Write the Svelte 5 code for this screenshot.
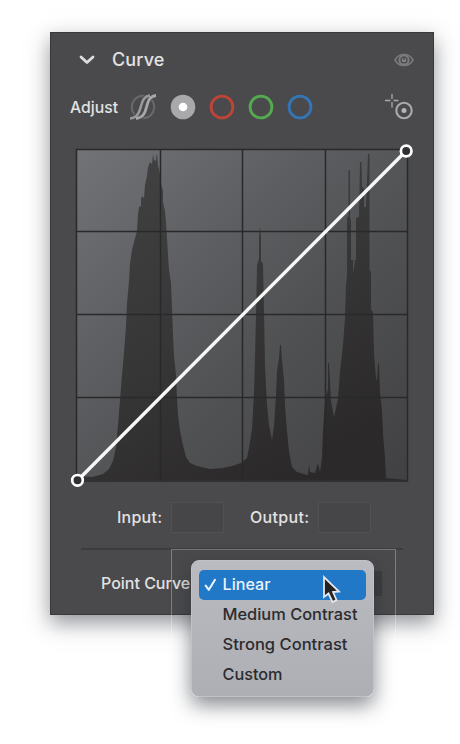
<script>
  const options = ['Linear', 'Medium Contrast', 'Strong Contrast', 'Custom'];
  const widths = [48, 135, 125, 60];
  const channels = [
    { name: 'red', color: '#bd4437' },
    { name: 'green', color: '#55a94e' },
    { name: 'blue', color: '#3475b5' }
  ];
  const columns = [160.5, 242.5, 325.5];
  const rows = [231.5, 314.5, 397.5];
</script>

<main>
  <section class="panel">
    <header class="head">
      <svg class="chevron" width="16" height="12" viewBox="0 0 16 12"><path d="M2 3 L8 8.6 L14 3" fill="none" stroke="#dedede" stroke-width="2.8" stroke-linecap="round" stroke-linejoin="round" /></svg>
      <h1>Curve</h1>
      <svg class="eye" width="20" height="14" viewBox="0 0 20 14">
        <path d="M1 7 C5 -.3 15 -.3 19 7 C15 14.3 5 14.3 1 7Z" fill="none" stroke="#79797b" stroke-width="1.6" />
        <circle cx="10" cy="7" r="4.6" fill="none" stroke="#7c7c7e" stroke-width="2" />
        <circle cx="10" cy="7" r="2.3" fill="#858587" /><path d="M10 7V3.6" stroke="#4a4a4c" stroke-width="1.4" />
      </svg>
    </header>

    <div class="adjust">
      <svg class="label" width="50" height="24"><text x="1" y="18" textLength="48" lengthAdjust="spacingAndGlyphs">Adjust</text></svg>
      <svg class="parametric" width="28" height="28" viewBox="0 0 28 28">
        <circle cx="13" cy="14" r="11.2" fill="none" stroke="#69696b" stroke-width="2" />
        <path d="M0 25.5 C15 24 7 4 20 2.5M6 25.5 C21 24 12.5 4 26 2.5" fill="none" stroke="#4a4a4c" stroke-width="4.6" />
        <path d="M0 25.5 C15 24 7 4 20 2.5" fill="none" stroke="#99999b" stroke-width="2.6" />
        <path d="M6 25.5 C21 24 12.5 4 26 2.5" fill="none" stroke="#a8a8aa" stroke-width="2.8" />
      </svg>
      <svg class="point" width="26" height="26" viewBox="0 0 26 26"><circle cx="13" cy="13" r="12.3" fill="#a9a9ac" /><circle cx="13" cy="13" r="4.3" fill="#fff" /></svg>
      {#each channels as c (c.name)}
        <svg class="channel" width="26" height="26" viewBox="0 0 26 26"><circle cx="13" cy="13" r="10.9" fill="none" stroke={c.color} stroke-width="2.9" /></svg>
      {/each}
      <svg class="target" width="30" height="28" viewBox="0 0 30 28" fill="none" stroke="#aaaaac">
        <path d="M8 1v5M8 9v5.5M1 7.5h5.5M9.5 7.5h5" stroke-width="1.3" />
        <circle cx="20" cy="17.5" r="7.7" stroke-width="2.1" /><circle cx="20" cy="17.5" r="2.5" fill="#b5b5b7" stroke="none" />
      </svg>
    </div>

    <svg class="plot" width="350" height="350" viewBox="70 140 350 350">
      <defs>
        <linearGradient id="bg" x1="0" y1="0" x2="1" y2="1">
          <stop offset="0" stop-color="#727376" /><stop offset=".35" stop-color="#5d5e61" /><stop offset=".6" stop-color="#505153" /><stop offset="1" stop-color="#414143" />
        </linearGradient>
        <linearGradient id="hist" gradientUnits="userSpaceOnUse" x1="100" y1="160" x2="280" y2="480">
          <stop offset="0" stop-color="#424243" /><stop offset=".55" stop-color="#373637" /><stop offset="1" stop-color="#2b292a" />
        </linearGradient>
      </defs>
      <rect x="76.5" y="149.5" width="331" height="331" fill="url(#bg)" />
      <path fill="url(#hist)" d="M77 480 V476 L92 477 L103 474 L109 469 L113 461 L116 447 L118 425 L120 400 L122 375 L124 352 L126 326 L127 303 L129 281 L130 264 L132 250 L134 242 L137 231 L138 215 L139 207 L141 206 L141 199 L142 196 L144 198 L145 185 L147 176 L148 167 L150 162 L152 164 L153 154 L154 160 L156 161 L156 157 L157 154 L158 165 L160 174 L161 184 L163 191 L163 202 L165 211 L166 222 L167 238 L168 255 L169 270 L171 283 L172 307 L173 335 L174 356 L176 375 L177 399 L178 415 L180 431 L183 445 L186 457 L190 463 L197 466 L210 469 L223 468 L232 466 L241 463 L247 458 L249 448 L252 429 L254 393 L255 357 L256 315 L257 265 L259 259 L259 227 L260 236 L261 226 L261 261 L263 264 L264 310 L265 365 L267 405 L269 425 L272 440 L274 426 L276 395 L277 371 L279 358 L280 345 L281 345 L282 360 L284 380 L285 405 L287 431 L289 451 L292 467 L297 472 L307 475 L308 475 L309 464 L310 472 L315 473 L318 463 L320 472 L322 458 L323 430 L325 400 L328 389 L328 363 L329 363 L331 401 L334 417 L338 399 L340 372 L343 345 L345 318 L346 285 L347 276 L347 218 L348.5 216 L348.5 170 L350 170 L350 218 L351 220 L351 260 L353 260 L353 274 L355 260 L356 260 L356 218 L359 217 L360 162 L361.5 162 L362 187 L364 188 L364 207 L366 207 L368 154 L369.5 154 L369.5 270 L371 272 L371 309 L373 312 L374 353 L376 379 L377 380 L378 363 L379 364 L380 392 L382 411 L383 434 L385 457 L386 478 L407 480Z" />
      <g stroke="#29292b" stroke-width="1.5" fill="none">
        <rect x="76.5" y="149.5" width="331" height="331.5" />
        {#each columns as x}<path d="M{x} 150V481" />{/each}
        {#each rows as y}<path d="M77 {y}H408" />{/each}
      </g>
      <path d="M78 480L406 151" stroke="#f7f7f7" stroke-width="3.4" />
      <g fill="#303032" stroke="#fff" stroke-width="2.7"><circle cx="77.5" cy="480.3" r="5.3" /><circle cx="406.2" cy="151" r="5.3" /></g>
    </svg>

    <div class="values">
      <svg class="label" width="46" height="24"><text x="0" y="18" textLength="45">Input:</text></svg>
      <span class="field"></span>
      <svg class="label output" width="60" height="24"><text x="0" y="18" textLength="59">Output:</text></svg>
      <span class="field"></span>
    </div>
    <hr />
    <div class="point-curve">
      <svg class="label" width="92" height="26"><text x="0" y="19" textLength="94">Point Curve:</text></svg>
      <span class="select"></span>
    </div>

    <div class="frame"></div>
    <div class="menu">
      {#each options as option, i}
        <div class="option" class:selected={i === 0}>
          {#if i === 0}
            <svg class="check" width="13" height="14" viewBox="0 0 13 14"><path d="M1.7 7.7L4.8 11.8L11 1.8" fill="none" stroke="#e9f2fb" stroke-width="2.1" stroke-linecap="round" stroke-linejoin="round" /></svg>
          {/if}
          <svg class="name" width="140" height="24"><text x="-.5" y="17" textLength={widths[i]} lengthAdjust="spacingAndGlyphs">{option}</text></svg>
        </div>
      {/each}
      <svg class="cursor" width="22" height="32" viewBox="0 0 22 32"><path d="M2 3 L2 23 L6.5 19.5 L10.5 28 L14.5 26 L11 18 L17 17.5Z" fill="#242122" stroke="#e4e7ec" stroke-width="1.8" stroke-linejoin="miter" /></svg>
    </div>
  </section>
</main>

<style>
  :global(body) { background: #fff; }
  main { box-sizing: border-box; width: 460px; height: 744px; padding: 32px 0 0 50px; overflow: hidden; font-family: Inter, "Liberation Sans", sans-serif; color: #e2e2e3; }
  .panel { position: relative; box-sizing: border-box; width: 384px; height: 583px; background: #4a4a4c; border: 1px solid #39393b; box-shadow: 0 8px 20px rgba(35, 40, 50, .5); }
  svg { display: block; flex: none; }
  .head { display: flex; align-items: center; height: 53px; padding: 0 19px 0 28px; }
  h1 { margin: 0 0 0 17px; font-size: 18px; line-height: 24px; font-weight: 500; letter-spacing: .15px; }
  .eye { margin-left: auto; }
  .adjust { display: flex; align-items: center; height: 42px; padding: 0 19px 0 18px; }
  .parametric { margin-left: 11px; }
  .point { margin-left: 12px; }
  .channel { margin-left: 13px; }
  .target { margin-left: auto; }
  .plot { margin: 12px 0 0 19px; }
  .label { font-size: 16px; font-weight: 500; fill: #e2e2e3; overflow: visible; }
  .values { display: flex; align-items: center; height: 54px; padding-left: 66px; }
  .field { box-sizing: border-box; width: 53px; height: 31px; margin-left: 8px; border: 1px solid #515153; background: #464648; }
  .values .output { margin-left: 26px; }
  hr { height: 2px; margin: 4px 30px 0; border: 0; background: #3c3c3e; }
  .point-curve { display: flex; align-items: center; height: 66px; padding-left: 50px; }
  .select { width: 182px; height: 25px; margin-left: 7px; background: #3d3d3f; }
  .frame { position: absolute; left: 120px; top: 516px; width: 223px; height: 96px; border: 1px solid rgba(255, 255, 255, .3); }
  .menu { position: absolute; box-sizing: border-box; left: 140px; top: 527px; width: 183px; height: 137px; padding: 9px 7px; border: 1px solid #c1c2c6; border-radius: 8px; background: linear-gradient(#babbc0, #adafb5); box-shadow: 0 8px 20px rgba(35, 40, 50, .55); }
  .option { display: flex; align-items: center; height: 30px; padding-left: 24px; border-radius: 5px; fill: #2c2b2e; font-size: 16px; font-weight: 500; }
  .name { overflow: visible; }
  .selected { padding-left: 5px; background: #2178c7; fill: #e9f2fb; }
  .check { margin-right: 6px; }
  .cursor { position: absolute; left: 130px; top: 13px; }
</style>
